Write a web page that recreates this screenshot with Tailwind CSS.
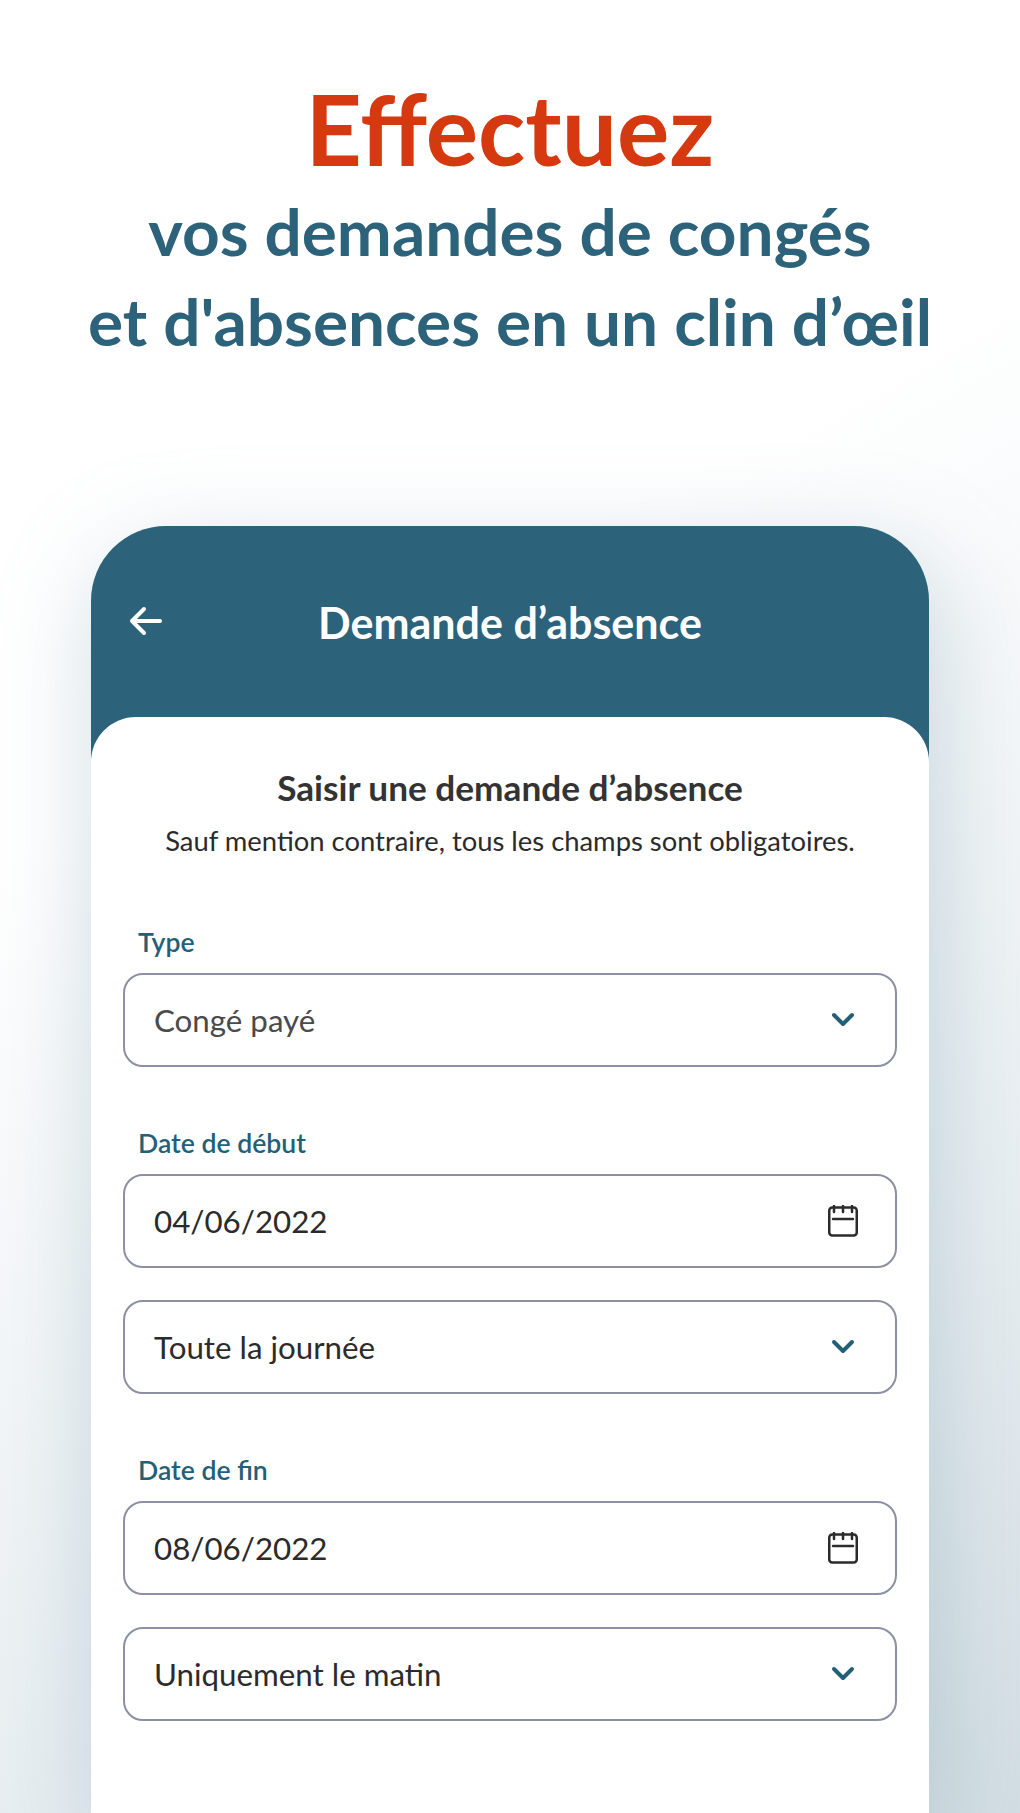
<!DOCTYPE html>
<html lang="fr">
<head>
    <meta charset="UTF-8">
    <title>Demande d'absence</title>
    <script src="https://cdn.jsdelivr.net/npm/@tailwindcss/browser@4"></script>
</head>
<body class="bg-white">
<div class="w-[1020px] h-[1813px] overflow-hidden font-['Lato',sans-serif] bg-[linear-gradient(150deg,#ffffff_0%,#ffffff_36%,#e8eef1_75%,#d3dee3_100%)]">

    <div class="pt-[71px] h-[526px] text-center">
        <h1 class="text-[98px] leading-[115px] font-bold text-[#d6380f]">Effectuez</h1>
        <p class="text-[65.7px] leading-[90px] font-bold text-[#2c627a]">vos demandes de congés</p>
        <p class="text-[65.7px] leading-[90px] font-bold text-[#2c627a]">et d'absences en un clin d’œil</p>
    </div>

    <div class="mx-[91px] w-[838px] h-[1287px] bg-[#2c627a] rounded-t-[75px] shadow-[8px_30px_100px_rgba(130,165,180,0.42)]">
        <div class="relative h-[191px] pt-[72px] text-center">
            <svg class="absolute left-[38px] top-[80px]" width="34" height="30" viewBox="0 0 34 30" fill="none" stroke="#ffffff" stroke-width="4" stroke-linecap="round" stroke-linejoin="round">
                <path d="M31 15H3M15 3 3 15l12 12"/>
            </svg>
            <p class="text-[43px] leading-[50px] font-bold text-white">Demande d’absence</p>
        </div>
        <div class="h-[1096px] bg-white rounded-t-[45px] px-[32px] pt-[50px] text-[#2b2b2b]">
            <h2 class="text-[35.2px] leading-[40px] font-bold text-center text-[#333333]">Saisir une demande d’absence</h2>
            <p class="text-[27.4px] leading-[32px] mt-[18px] text-center">Sauf mention contraire, tous les champs sont obligatoires.</p>

            <label class="block mt-[69px] ml-[15px] text-[26.6px] leading-[32px] font-semibold text-[#245f78]">Type</label>
            <div class="mt-[15px] h-[94px] border-2 border-[#8b90a3] rounded-[20px] pl-[29px] pr-[40px] flex items-center justify-between">
                <span class="text-[31.3px] text-[#4a4a4a]">Congé payé</span>
                <svg width="24" height="16" viewBox="0 0 24 16" fill="none" stroke="#245f78" stroke-width="4" stroke-linecap="round" stroke-linejoin="round"><path d="M3 3l9 9 9-9"/></svg>
            </div>

            <label class="block mt-[60px] ml-[15px] text-[26.6px] leading-[32px] font-semibold text-[#245f78]">Date de début</label>
            <div class="mt-[15px] h-[94px] border-2 border-[#8b90a3] rounded-[20px] pl-[29px] pr-[37px] flex items-center justify-between">
                <span class="text-[31.3px]">04/06/2022</span>
                <svg width="30" height="32" viewBox="0 0 30 32" fill="none" stroke="#2b2b2b" stroke-width="2.5" stroke-linecap="round" stroke-linejoin="round"><rect x="1.25" y="2.5" width="27.5" height="28" rx="3"/><path d="M6 1v6M15 1v6M24 1v6M5 14h20"/></svg>
            </div>
            <div class="mt-[32px] h-[94px] border-2 border-[#8b90a3] rounded-[20px] pl-[29px] pr-[40px] flex items-center justify-between">
                <span class="text-[31.3px]">Toute la journée</span>
                <svg width="24" height="16" viewBox="0 0 24 16" fill="none" stroke="#245f78" stroke-width="4" stroke-linecap="round" stroke-linejoin="round"><path d="M3 3l9 9 9-9"/></svg>
            </div>

            <label class="block mt-[60px] ml-[15px] text-[26.6px] leading-[32px] font-semibold text-[#245f78]">Date de fin</label>
            <div class="mt-[15px] h-[94px] border-2 border-[#8b90a3] rounded-[20px] pl-[29px] pr-[37px] flex items-center justify-between">
                <span class="text-[31.3px]">08/06/2022</span>
                <svg width="30" height="32" viewBox="0 0 30 32" fill="none" stroke="#2b2b2b" stroke-width="2.5" stroke-linecap="round" stroke-linejoin="round"><rect x="1.25" y="2.5" width="27.5" height="28" rx="3"/><path d="M6 1v6M15 1v6M24 1v6M5 14h20"/></svg>
            </div>
            <div class="mt-[32px] h-[94px] border-2 border-[#8b90a3] rounded-[20px] pl-[29px] pr-[40px] flex items-center justify-between">
                <span class="text-[31.3px]">Uniquement le matin</span>
                <svg width="24" height="16" viewBox="0 0 24 16" fill="none" stroke="#245f78" stroke-width="4" stroke-linecap="round" stroke-linejoin="round"><path d="M3 3l9 9 9-9"/></svg>
            </div>
        </div>
    </div>
</div>
</body>
</html>
